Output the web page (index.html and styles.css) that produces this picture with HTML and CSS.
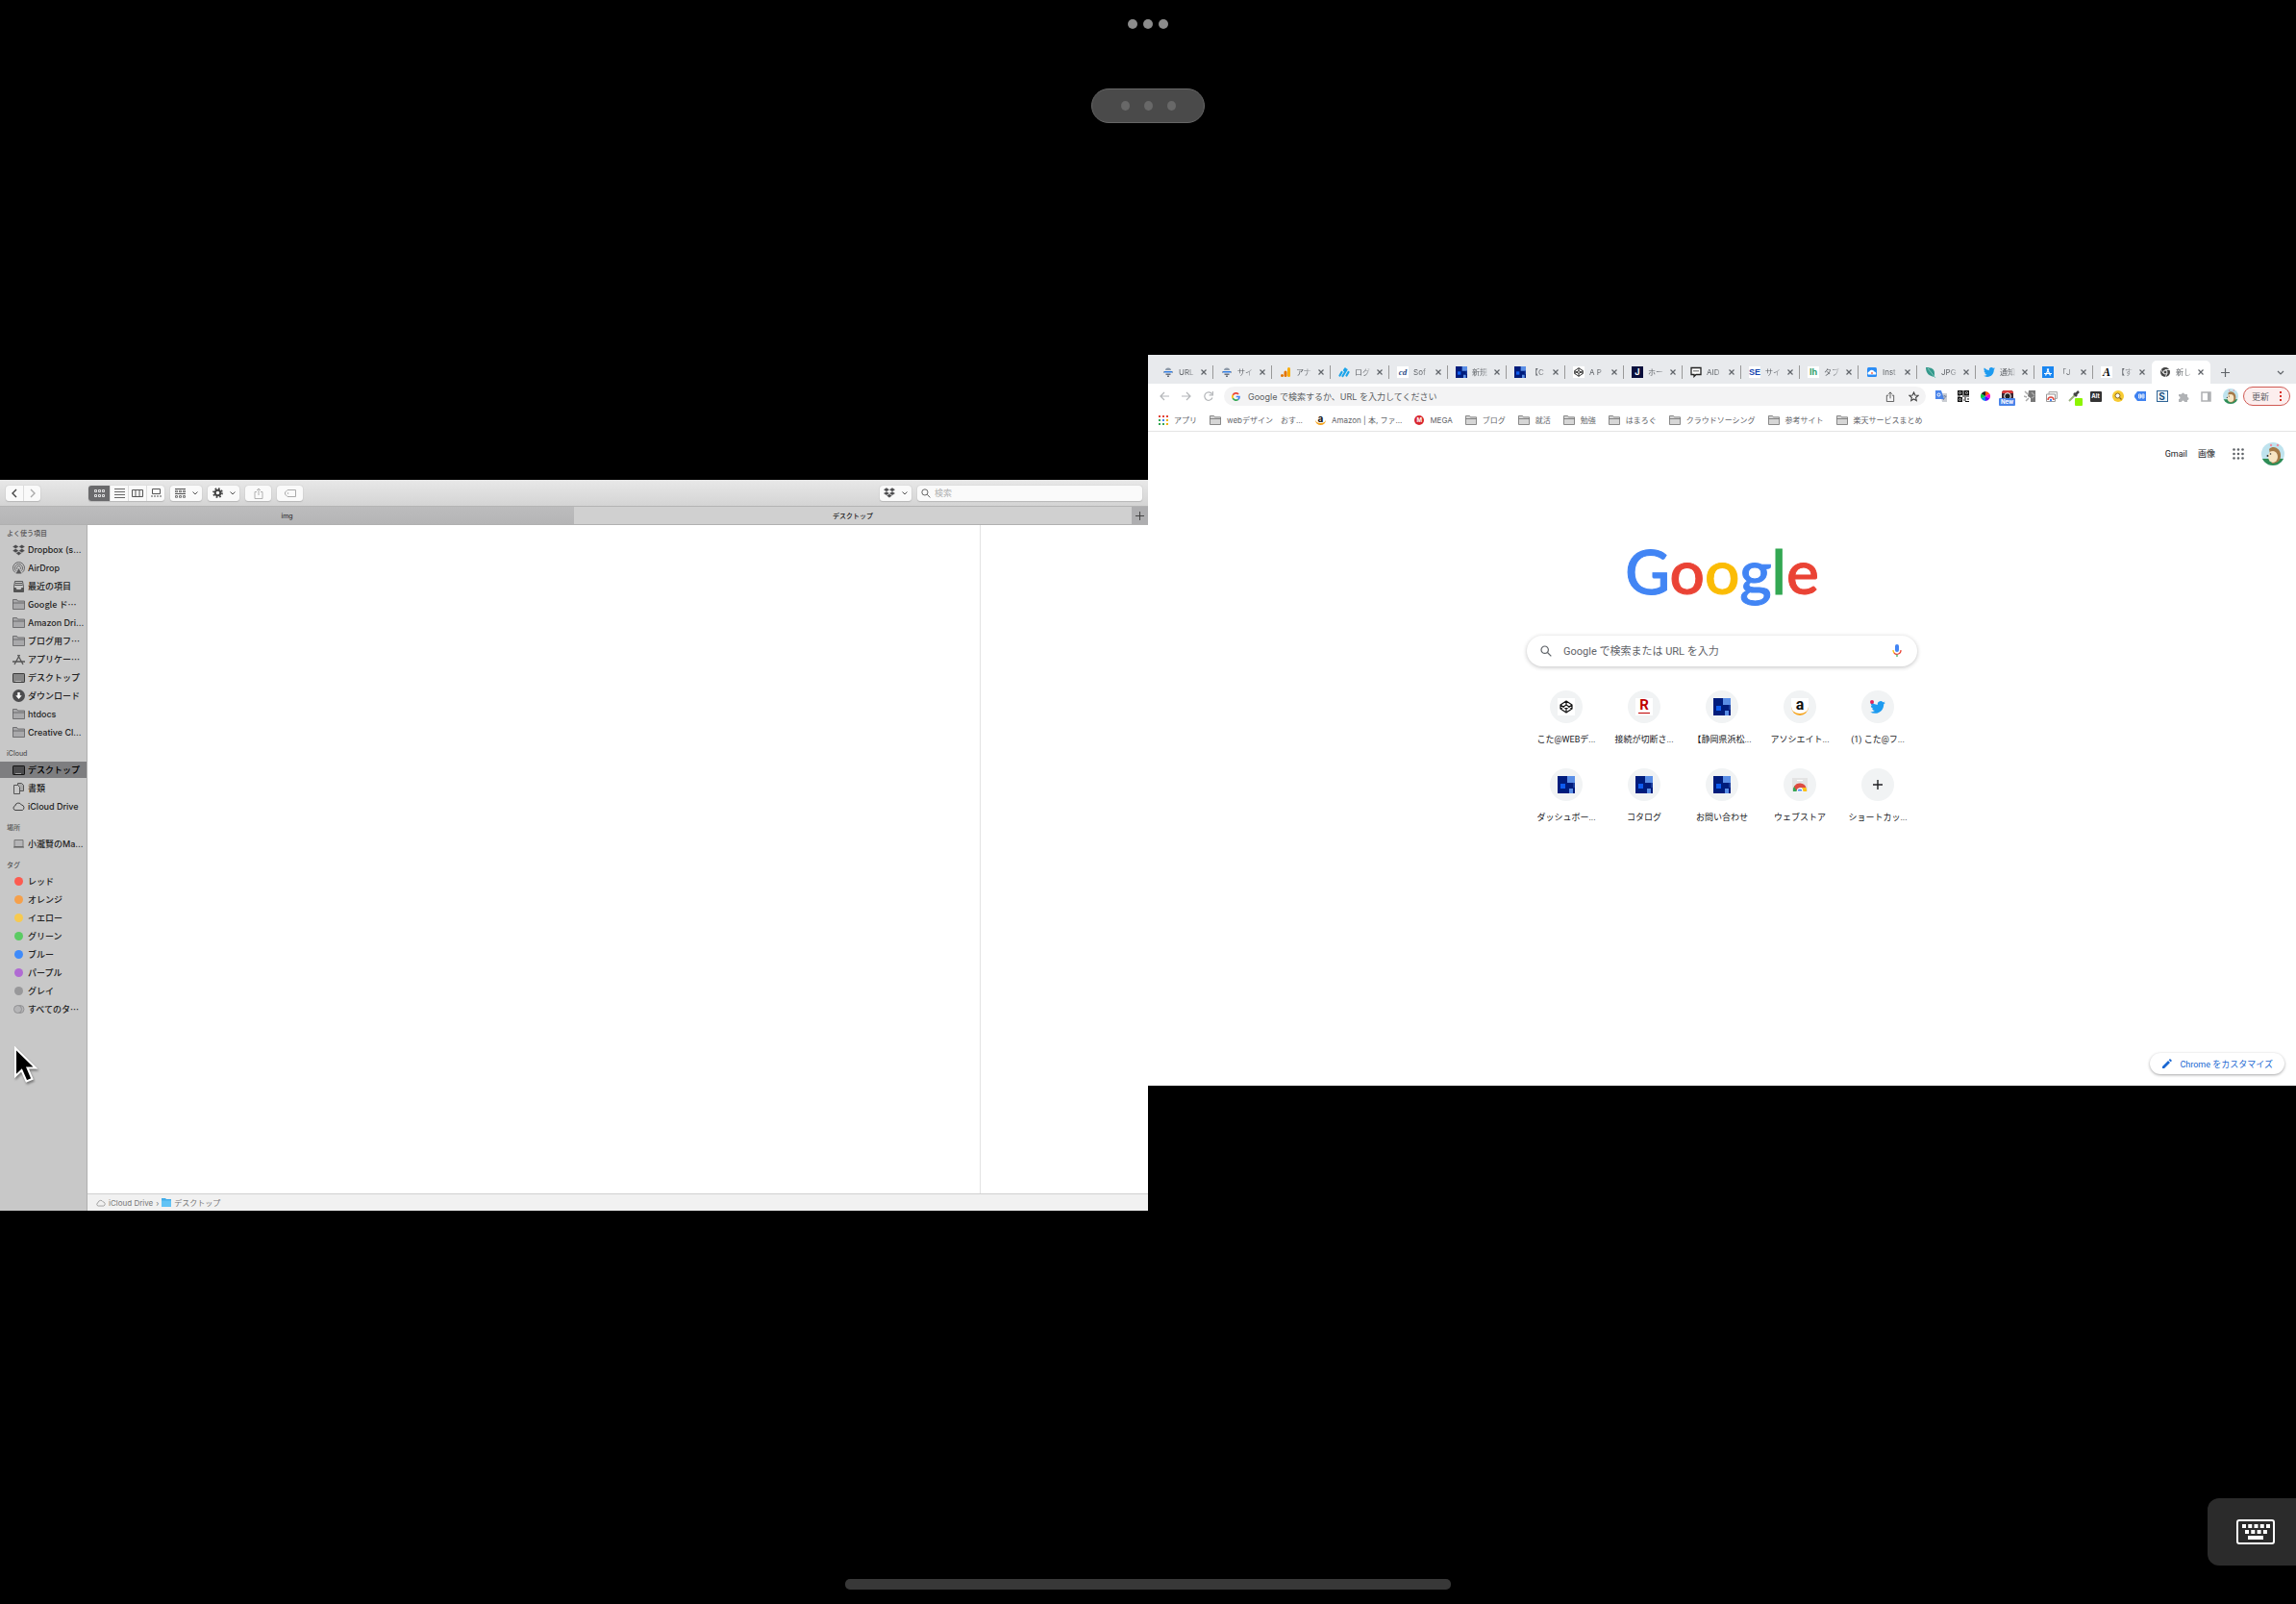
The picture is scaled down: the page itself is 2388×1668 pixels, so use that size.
FILE: index.html
```html
<!DOCTYPE html>
<html lang="ja">
<head>
    <meta charset="UTF-8">
    <meta name="viewport" content="width=device-width, initial-scale=1.0">
    <title>デスクトップ</title>
    <link rel="stylesheet" href="styles.css">
</head>
<body>
    <svg class="sprite" aria-hidden="true">
        <symbol id="folder" viewBox="0 0 13 11">
            <path d="M.5 10.500V.5h4l1 1.500h7v8.500z M.5 4h12" fill="#a9a9ab" stroke="#5c5c5e" stroke-width=".8"/>
        </symbol>
        <symbol id="bm-folder" viewBox="0 0 12 10">
            <path d="M.5 9.500v-9h4l1 1.300h6v7.700z" fill="#d6d6d6" stroke="#707070" stroke-width=".8"/>
            <path d="M.5 3.500h11" stroke="#707070" stroke-width=".8"/>
        </symbol>
        <symbol id="dropbox" viewBox="0 0 14 12">
            <path d="M3.500 0L7 2.200 3.500 4.400 0 2.200zM10.500 0L14 2.200l-3.500 2.200L7 2.200zM3.500 4.500L7 6.700 3.500 8.900 0 6.700zM10.500 4.500L14 6.700l-3.500 2.200L7 6.700zM7 7.600l3.200 2L7 11.800l-3.200-2.200z" fill="#4a4a4c" stroke="#d0d0d0" stroke-width=".3"/>
        </symbol>
        <symbol id="desktop" viewBox="0 0 13 10">
            <rect x=".5" y=".5" width="12" height="9" rx=".6" fill="currentColor" fill-opacity=".4" stroke="currentColor" stroke-opacity=".8"/>
            <path d="M3.500 8.500h6" stroke="#eee" stroke-dasharray="1 1"/>
        </symbol>
        <symbol id="cloud" viewBox="0 0 13 9">
            <path d="M3 8.500a2.300 2.300 0 0 1-.3-4.500 3.500 3.500 0 0 1 6.600-1 2.900 2.900 0 0 1 1 5.500z" fill="none" stroke="currentColor" stroke-width=".8"/>
        </symbol>
        <symbol id="chevron" viewBox="0 0 6 4">
            <path d="M.8.800L3 3 5.200.800" fill="none" stroke="#555" stroke-linecap="round"/>
        </symbol>
        <symbol id="close" viewBox="0 0 8 8">
            <path d="M1.500 1.500l5 5m0-5l-5 5" stroke="#5f6368" stroke-width="1.200"/>
        </symbol>
        <symbol id="squares" viewBox="0 0 18 18">
            <path d="M0 0h18v18H0z" fill="#001c7c"/>
            <path d="M10 0h8v7h-8zM12 13h4v5h-4z" fill="#5a8ee6"/>
            <path d="M16 7h2v5h-2z" fill="#1a3c9c"/>
            <path d="M3 8h5v5H3z" fill="#0e5cf0"/>
        </symbol>
        <symbol id="codepen" viewBox="0 0 14 14">
            <path d="M7 1l6 4v4l-6 4-6-4V5zM1 5l6 4 6-4M1 9l6-4 6 4M7 1v4M7 9v4" fill="none" stroke="#111" stroke-width="1.200" stroke-linejoin="round"/>
        </symbol>
        <symbol id="bird" viewBox="0 0 24 20">
            <path d="M7.550 19.750c9.050 0 14-7.500 14-14v-.65A10 10 0 0 0 24 2.560a10 10 0 0 1-2.800.78A5 5 0 0 0 23.340.600a10 10 0 0 1-3.130 1.200 4.900 4.900 0 0 0-8.400 4.500A14 14 0 0 1 1.670 1.150a4.900 4.900 0 0 0 1.530 6.570A5 5 0 0 1 .96 7.100a4.900 4.900 0 0 0 3.950 4.900 5 5 0 0 1-2.220.08 4.900 4.900 0 0 0 4.600 3.420A10 10 0 0 1 0 17.540a14 14 0 0 0 7.550 2.210z" fill="#1d9bf0"/>
        </symbol>
        <symbol id="crawler" viewBox="0 0 12 12">
            <path d="M3 4a3 2.500 0 0 1 6 0z" fill="#8d99a8"/>
            <path d="M2 5h8v1.500H2z" fill="#2f7be0"/>
            <path d="M1 5h1v2H1zM10 5h1v2h-1z" fill="#9aa6b5"/>
            <path d="M3.500 7.500h5V9h-5zM5 9.500h2V11H5z" fill="#68707c"/>
        </symbol>
        <symbol id="avatar" viewBox="0 0 24 24">
            <clipPath id="round"><circle cx="12" cy="12" r="12"/></clipPath>
            <g clip-path="url(#round)">
                <path d="M0 0h24v24H0z" fill="#bfe3ee"/>
                <path d="M0 17h24v7H0z" fill="#2f8d56"/>
                <path d="M8 7c5-5 13 0 12 8-.5 5-5 7-9 7z" fill="#a57a48"/>
                <ellipse cx="12" cy="15" rx="5" ry="6" fill="#f7e5c4"/>
                <path d="M6 14l4-5 3 4z" fill="#f7e5c4"/>
                <circle cx="9.500" cy="12" r=".8" fill="#333"/>
                <circle cx="6.500" cy="14" r="1" fill="#333"/>
                <circle cx="10" cy="3" r="1.200" fill="#ee8ca0"/>
                <circle cx="17" cy="3" r="1.200" fill="#ee8ca0"/>
            </g>
        </symbol>
        <symbol id="share" viewBox="0 0 10 12">
            <path d="M3 4.500H1v7h8v-7H7M5 8V1M3 3l2-2 2 2" fill="none" stroke="currentColor" stroke-width=".9"/>
        </symbol>
        <symbol id="lens" viewBox="0 0 12 12">
            <circle cx="4.700" cy="4.700" r="3.700" fill="none" stroke="currentColor" stroke-width="1.200"/>
            <path d="M7.500 7.500l3.800 3.800" stroke="currentColor" stroke-width="1.200"/>
        </symbol>
        <symbol id="webstore" viewBox="0 0 16 16">
            <path d="M0 1h16v14H0z" fill="#e3e3e3"/>
            <path d="M5 3h6v1H5z" fill="#fff"/>
            <path d="M1 15a7 7 0 0 1 1.500-6L6 15z" fill="#34a853"/>
            <path d="M2 10a7 7 0 0 1 12.500 1H8a4 4 0 0 0-3.500 3z" fill="#dd4b41"/>
            <path d="M14.500 11a7 7 0 0 1 .5 4h-4a4 4 0 0 0-1-4z" fill="#fbc116"/>
            <path d="M5 15a3 3 0 0 1 6 0z" fill="#4285f4" stroke="#fff"/>
        </symbol>
    </svg>

    <header class="handles">
        <div class="dots"><i></i><i></i><i></i></div>
        <button class="pill" aria-label="ウインドウ操作"><i></i><i></i><i></i></button>
    </header>

    <main class="windows">
        <!-- Finder -->
        <section class="window finder">
            <div class="finder-toolbar">
                <div class="segmented nav">
                    <button aria-label="戻る"><svg width="6" height="10"><path d="M5 1L1 5l4 4" fill="none" stroke="#444" stroke-width="1.400"/></svg></button>
                    <button aria-label="進む"><svg width="6" height="10"><path d="M1 1l4 4-4 4" fill="none" stroke="#aaa" stroke-width="1.400"/></svg></button>
                </div>
                <div class="segmented views">
                    <button class="on" aria-label="アイコン"><svg width="11" height="8"><path d="M.5.500h2v2h-2zM4.500.500h2v2h-2zM8.500.500h2v2h-2zM.5 5.500h2v2h-2zM4.500 5.500h2v2h-2zM8.500 5.500h2v2h-2z" fill="none" stroke="#fff" stroke-width=".8"/></svg></button>
                    <button aria-label="リスト"><svg width="11" height="10"><path d="M0 .5h11M0 3.500h11M0 6.500h11M0 9.500h11" stroke="#555" stroke-width=".9"/></svg></button>
                    <button aria-label="カラム"><svg width="12" height="8"><path d="M.5.500h11v7H.5zM4 .5v7M8 .5v7" fill="none" stroke="#555"/></svg></button>
                    <button aria-label="ギャラリー"><svg width="11" height="9"><path d="M1.500.500h8v5h-8z" fill="none" stroke="#555"/><path d="M0 8h11" stroke="#555" stroke-dasharray="2 1"/></svg></button>
                </div>
                <button class="tool drop" aria-label="グループ"><svg width="11" height="10"><path d="M0 .5h11M0 5.500h11" stroke="#555"/><path d="M.5 2.200h2v1.600h-2zM4.500 2.200h2v1.600h-2zM8.500 2.200h2v1.600h-2zM.5 7.500h2v1.800h-2zM4.500 7.500h2v1.800h-2zM8.500 7.500h2v1.800h-2z" fill="none" stroke="#555" stroke-width=".8"/></svg><svg width="6" height="4"><use href="#chevron"/></svg></button>
                <button class="tool drop" aria-label="アクション"><svg width="11" height="11"><circle cx="5.500" cy="5.500" r="2.800" fill="none" stroke="#444" stroke-width="2"/><circle cx="5.500" cy="5.500" r="4.500" fill="none" stroke="#444" stroke-width="1.800" stroke-dasharray="1.700 1.834"/></svg><svg width="6" height="4"><use href="#chevron"/></svg></button>
                <button class="tool off" aria-label="共有"><svg width="10" height="12"><use href="#share"/></svg></button>
                <button class="tool off" aria-label="タグ"><svg width="12" height="8"><path d="M3 .5h8.500v7H3L.5 5V3z" fill="none" stroke="currentColor"/><circle cx="3.500" cy="4" r=".8" fill="currentColor"/></svg></button>
                <button class="tool drop dropbox" aria-label="Dropbox"><svg width="12" height="11"><use href="#dropbox"/></svg><svg width="6" height="4"><use href="#chevron"/></svg></button>
                <label class="finder-search"><svg width="10" height="10"><use href="#lens"/></svg><input type="text" placeholder="検索" aria-label="検索"></label>
            </div>
            <div class="finder-tabs">
                <button class="finder-tab">img</button>
                <button class="finder-tab current jp">デスクトップ</button>
                <button class="finder-add" aria-label="新規タブ"><svg width="9" height="9"><path d="M4.500 0v9M0 4.500h9" stroke="#444"/></svg></button>
            </div>
            <div class="finder-body">
                <nav class="sidebar">
                    <h2>よく使う項目</h2>
                    <ul>
                        <li><a href="#"><svg width="13" height="12"><use href="#dropbox"/></svg>Dropbox (s...</a></li>
                        <li><a href="#"><svg width="13" height="13"><g fill="none" stroke="#5a5a5c" stroke-width=".9"><path d="M3 11.500a6 6 0 1 1 7 0M4 9.800a4 4 0 1 1 5 0M5 8a2 2 0 1 1 3 0"/></g><path d="M6.500 7l3 5.500h-6z" fill="#5a5a5c"/></svg>AirDrop</a></li>
                        <li><a href="#"><svg width="13" height="12"><path d="M2.500.500h8l1 6v5h-10v-5z" fill="#c8c8c8" stroke="#555"/><path d="M3 2.500h7M2.500 4.500h8" stroke="#555"/><path d="M1.500 7h2l1 2h4l1-2h2v4.500h-10z" fill="#555"/></svg>最近の項目</a></li>
                        <li><a class="jp" href="#"><svg width="13" height="11"><use href="#folder"/></svg>Google ド…</a></li>
                        <li><a href="#"><svg width="13" height="11"><use href="#folder"/></svg>Amazon Dri...</a></li>
                        <li><a class="jp" href="#"><svg width="13" height="11"><use href="#folder"/></svg>ブログ用フ…</a></li>
                        <li><a class="jp" href="#"><svg width="13" height="12"><path d="M7.500 1L2 11M5.500 1L11 11M0 8h13" stroke="#555" stroke-width="1.300"/></svg>アプリケー…</a></li>
                        <li><a class="jp" href="#"><svg width="13" height="10"><use href="#desktop"/></svg>デスクトップ</a></li>
                        <li><a class="jp" href="#"><svg width="13" height="13"><circle cx="6.500" cy="6.500" r="6.500" fill="#4c4c4e"/><path d="M5.300 3h2.400v3.300h2L6.500 10 3.300 6.300h2z" fill="#fff"/></svg>ダウンロード</a></li>
                        <li><a href="#"><svg width="13" height="11"><use href="#folder"/></svg>htdocs</a></li>
                        <li><a href="#"><svg width="13" height="11"><use href="#folder"/></svg>Creative Cl...</a></li>
                    </ul>
                    <h2>iCloud</h2>
                    <ul>
                        <li><a class="jp selected" href="#"><svg width="13" height="10"><use href="#desktop"/></svg>デスクトップ</a></li>
                        <li><a class="jp" href="#"><svg width="13" height="12"><path d="M5.500.500h4l2 2v6h-6z" fill="#aaa" stroke="#555"/><path d="M1.500 2.500h4l2 2v7h-6z" fill="#c8c8c8" stroke="#555"/></svg>書類</a></li>
                        <li><a href="#"><svg width="13" height="9"><use href="#cloud"/></svg>iCloud Drive</a></li>
                    </ul>
                    <h2>場所</h2>
                    <ul>
                        <li><a href="#"><svg width="13" height="9"><path d="M2 .5h9v7H2z" fill="#b5b5b7" stroke="#777"/><path d="M1 8h11" stroke="#555"/></svg>小瀧賢のMa...</a></li>
                    </ul>
                    <h2>タグ</h2>
                    <ul>
                        <li><a class="jp" href="#"><i class="tag red"></i>レッド</a></li>
                        <li><a class="jp" href="#"><i class="tag orange"></i>オレンジ</a></li>
                        <li><a class="jp" href="#"><i class="tag yellow"></i>イエロー</a></li>
                        <li><a class="jp" href="#"><i class="tag green"></i>グリーン</a></li>
                        <li><a class="jp" href="#"><i class="tag blue"></i>ブルー</a></li>
                        <li><a class="jp" href="#"><i class="tag purple"></i>パープル</a></li>
                        <li><a class="jp" href="#"><i class="tag gray"></i>グレイ</a></li>
                        <li><a class="jp" href="#"><svg width="13" height="9"><g fill="#b5b5b7" stroke="#88888a" stroke-width=".8"><circle cx="8" cy="4.500" r="4"/><circle cx="5.500" cy="4.500" r="4"/></g></svg>すべてのタ…</a></li>
                    </ul>
                </nav>
                <div class="finder-main">
                    <div class="files">
                        <div class="preview"></div>
                    </div>
                    <div class="path-bar">
                        <svg width="10" height="8"><use href="#cloud"/></svg>
                        <span>iCloud Drive</span>
                        <span>›</span>
                        <svg width="10" height="9"><path d="M0 0h4l1 1h5v8H0z" fill="#43ade9"/><path d="M0 2.500h10V9H0z" fill="#62c3f5"/></svg>
                        <span>デスクトップ</span>
                    </div>
                </div>
            </div>
            <svg class="cursor" width="26" height="40" viewBox="0 0 26 40">
                <path d="M2 2v29l6.500-6 5 11.500 6-2.500-5-11.500H23z" fill="#000" stroke="#fff" stroke-width="2"/>
            </svg>
        </section>

        <!-- Chrome -->
        <section class="window chrome">
            <div class="tab-strip">
                <div class="tab"><svg width="12" height="12"><use href="#crawler"/></svg><span>URL</span><button aria-label="閉じる"><svg width="8" height="8"><use href="#close"/></svg></button></div>
                <div class="tab"><svg width="12" height="12"><use href="#crawler"/></svg><span>サイ</span><button aria-label="閉じる"><svg width="8" height="8"><use href="#close"/></svg></button></div>
                <div class="tab"><svg width="12" height="12"><rect x="8" y="1" width="3" height="10" rx="1.500" fill="#f9ab00"/><rect x="4.500" y="4.500" width="3" height="6.500" rx="1.500" fill="#e37400"/><circle cx="2.500" cy="9.500" r="1.500" fill="#e37400"/></svg><span>アナ</span><button aria-label="閉じる"><svg width="8" height="8"><use href="#close"/></svg></button></div>
                <div class="tab"><svg width="12" height="12"><path d="M1.500 9.500l2-3.500M4.500 10l4-6.500M8.500 9.500l2-3.500M6 4l1-1.500" stroke="#1ba4ea" stroke-width="2.200" stroke-linecap="round"/></svg><span>ログ</span><button aria-label="閉じる"><svg width="8" height="8"><use href="#close"/></svg></button></div>
                <div class="tab"><b class="fav script">cd</b><span>Sof</span><button aria-label="閉じる"><svg width="8" height="8"><use href="#close"/></svg></button></div>
                <div class="tab"><svg width="12" height="12"><use href="#squares"/></svg><span>新規</span><button aria-label="閉じる"><svg width="8" height="8"><use href="#close"/></svg></button></div>
                <div class="tab"><svg width="12" height="12"><use href="#squares"/></svg><span>【C</span><button aria-label="閉じる"><svg width="8" height="8"><use href="#close"/></svg></button></div>
                <div class="tab"><svg width="12" height="12"><path d="M0 0h12v12H0z" fill="#fff"/><use href="#codepen" x="1" y="1" width="10" height="10"/></svg><span>A P</span><button aria-label="閉じる"><svg width="8" height="8"><use href="#close"/></svg></button></div>
                <div class="tab"><b class="fav navy">J</b><span>ホー</span><button aria-label="閉じる"><svg width="8" height="8"><use href="#close"/></svg></button></div>
                <div class="tab"><svg width="12" height="12"><path d="M1 1.500h10v7H6l-2 2v-2H1z" fill="#fff" stroke="#222" stroke-width="1.300"/><path d="M4 4v1.500M6 4v1.500M8 4v1.500" stroke="#222"/></svg><span>AID</span><button aria-label="閉じる"><svg width="8" height="8"><use href="#close"/></svg></button></div>
                <div class="tab"><b class="fav se">SE</b><span>サイ</span><button aria-label="閉じる"><svg width="8" height="8"><use href="#close"/></svg></button></div>
                <div class="tab"><b class="fav lh">lh</b><span>タブ</span><button aria-label="閉じる"><svg width="8" height="8"><use href="#close"/></svg></button></div>
                <div class="tab"><svg width="12" height="12"><rect x="1" y="1" width="10" height="10" rx="1.500" fill="#2b8df5"/><path d="M2 8.500a2 2 0 0 1 1-3 3 3 0 0 1 5.500 0 2 2 0 0 1 1.500 3z" fill="#fff"/><circle cx="6" cy="7" r="1" fill="#f26e5a"/></svg><span>Inst</span><button aria-label="閉じる"><svg width="8" height="8"><use href="#close"/></svg></button></div>
                <div class="tab"><svg width="12" height="12"><path d="M1 1c6 0 9 2 9 6v4C4 10 1 7 1 1z" fill="#35998c"/><path d="M3 2l8 10" stroke="#7cc7bb"/></svg><span>JPG</span><button aria-label="閉じる"><svg width="8" height="8"><use href="#close"/></svg></button></div>
                <div class="tab"><svg width="12" height="10"><use href="#bird"/></svg><span>通知</span><button aria-label="閉じる"><svg width="8" height="8"><use href="#close"/></svg></button></div>
                <div class="tab"><svg width="12" height="12"><path d="M0 0h12v12H0z" fill="#1a86f0"/><path d="M6.800 2.500L3.500 9.500M5.200 2.500L8.500 9.500M2 7.500h8" stroke="#fff" stroke-width="1.200"/></svg><span>「J</span><button aria-label="閉じる"><svg width="8" height="8"><use href="#close"/></svg></button></div>
                <div class="tab"><b class="fav italic">A</b><span>【す</span><button aria-label="閉じる"><svg width="8" height="8"><use href="#close"/></svg></button></div>
                <div class="tab active"><svg width="12" height="12"><circle cx="6" cy="6" r="5" fill="#444"/><path d="M6 3.500h5M3.800 7.200L1.400 3M8.200 7.200L5.700 11.500" stroke="#fff" stroke-width=".8"/><circle cx="6" cy="6" r="2" fill="#444" stroke="#fff"/></svg><span>新し</span><button aria-label="閉じる"><svg width="8" height="8"><use href="#close"/></svg></button></div>
                <button class="new-tab" aria-label="新しいタブ"><svg width="9" height="9"><path d="M4.500 0v9M0 4.500h9" stroke="#5f6368" stroke-width="1.200"/></svg></button>
                <button class="tab-menu" aria-label="タブを検索"><svg width="8" height="5"><path d="M1 1l3 3 3-3" fill="none" stroke="#5f6368" stroke-width="1.200"/></svg></button>
            </div>

            <div class="toolbar">
                <button class="go" aria-label="戻る"><svg width="10" height="10"><path d="M10 5H1M5 1L1 5l4 4" fill="none" stroke="#b4b6b9" stroke-width="1.200"/></svg></button>
                <button class="go" aria-label="進む"><svg width="10" height="10"><path d="M0 5h9M5 1l4 4-4 4" fill="none" stroke="#b4b6b9" stroke-width="1.200"/></svg></button>
                <button class="go" aria-label="再読み込み"><svg width="10" height="10"><path d="M9 6.500A4.200 4.200 0 1 1 8.500 2.700M9.400 0v3.800H5.600" fill="none" stroke="#b4b6b9" stroke-width="1.200"/></svg></button>
                <div class="omnibox">
                    <svg width="9" height="9" viewBox="0 0 18 18"><g fill="none" stroke-width="3.400"><path d="M14.300 3.900A7.200 7.200 0 0 0 2.600 5.700" stroke="#ea4335"/><path d="M2.600 5.700a7.200 7.200 0 0 0 0 6.600" stroke="#fbbc05"/><path d="M2.600 12.300a7.200 7.200 0 0 0 11 2.300" stroke="#34a853"/><path d="M13.600 14.600A7 7 0 0 0 16 9H9.500" stroke="#4285f4"/></g></svg>
                    <input type="text" placeholder="Google で検索するか、URL を入力してください" aria-label="アドレス">
                    <button aria-label="共有"><svg width="10" height="11"><use href="#share"/></svg></button>
                    <button aria-label="ブックマーク"><svg width="11" height="11"><path d="M5.500 1l1.300 3 3.200.300-2.400 2.200.700 3.200-2.800-1.700-2.800 1.700.700-3.200L1 4.300 4.200 4z" fill="none" stroke="#444" stroke-width="1.100"/></svg></button>
                </div>
                <div class="extensions">
                    <button aria-label="翻訳"><svg width="12" height="12"><path d="M5 3h7v9H7z" fill="#c9ccd2"/><path d="M0 0h6l3 9H0z" fill="#4a84ea"/><circle cx="3.500" cy="4.500" r="1.500" fill="none" stroke="#fff"/><path d="M7.500 6h4M9.500 5v1M8 10l3-4" stroke="#63779c" stroke-width=".7"/></svg></button>
                    <button aria-label="QR"><svg width="12" height="12"><path d="M.7.700h3.600v3.600H.7zM7.700.700h3.600v3.600H7.700zM.7 7.700h3.600v3.600H.7z" fill="none" stroke="#111" stroke-width="1.400"/><path d="M2 2.500h1M9 2.500h1M2 9.500h1M6 0v5M5 6h7M0 6h3M7 8h2M10 9h2M6 10h3M8 11.500h4" stroke="#111" stroke-width="1.200"/></svg></button>
                    <button aria-label="カラー"><svg width="10" height="10"><path d="M5 5V0a5 5 0 0 1 4.300 2.500z" fill="#f50"/><path d="M5 5l4.300-2.500a5 5 0 0 1 0 5z" fill="#f0c"/><path d="M5 5l4.300 2.500A5 5 0 0 1 5 10z" fill="#60f"/><path d="M5 5v5A5 5 0 0 1 .7 7.500z" fill="#08e"/><path d="M5 5L.7 7.500a5 5 0 0 1 0-5z" fill="#0c4"/><path d="M5 5L.7 2.500A5 5 0 0 1 5 0z" fill="#222"/></svg></button>
                    <button class="badged" aria-label="カメラ"><svg width="12" height="12"><rect width="12" height="12" rx="3" fill="#3a2430"/><path d="M0 3a3 3 0 0 1 3-3h6a3 3 0 0 1 3 3z" fill="#d93a3a"/><circle cx="6" cy="6" r="3.300" fill="#222" stroke="#fff"/></svg><em class="new">New</em></button>
                    <button aria-label="計測"><svg width="12" height="12"><path d="M5 0h7v12H7V8L4 6z" fill="#777"/><path d="M1 1l3 3M0 6l3 1M2 11l3-3M8 2l3 3M8 8l3-2" stroke="#aaa" stroke-width="1.500"/></svg></button>
                    <button aria-label="ギャラリー"><svg width="12" height="11"><path d="M3 .5h8.500v7H3z" fill="#eee" stroke="#aaa"/><path d="M.5 3h9v7.500h-9z" fill="#fff" stroke="#999"/><path d="M2 9a3 3 0 0 1 6 0" fill="none" stroke="#dd4b41" stroke-width="1.500"/><circle cx="5" cy="9" r="1.200" fill="#4285f4"/></svg></button>
                    <button class="badged" aria-label="スポイト"><svg width="12" height="12"><path d="M1 11l6-6" stroke="#9ab07c" stroke-width="2"/><path d="M6 3l3 3M8 4l3-3" stroke="#444" stroke-width="2.500"/></svg><em class="pick"></em></button>
                    <button aria-label="Alt"><b class="alt">Alt</b></button>
                    <button aria-label="検索"><svg width="12" height="12"><circle cx="6" cy="6" r="6" fill="#f8cb32"/><circle cx="5.500" cy="5.500" r="2.500" fill="#fff" stroke="#8a6a20"/><path d="M7.500 7.500l2 2" stroke="#8a6a20" stroke-width="1.300"/></svg></button>
                    <button aria-label="タグ"><svg width="12" height="10"><path d="M3 0h9v10H3L0 6V4z" fill="#3f82f0"/><path d="M4.500 3h2v4h-2zM8 3h2v4H8zM4.500 5h5.500" fill="none" stroke="#fff" stroke-width=".8"/></svg></button>
                    <button aria-label="Stylus"><b class="stylus">S</b></button>
                    <button aria-label="拡張機能"><svg width="11" height="11"><path d="M0 3h3a1.500 1.500 0 1 1 3 0h3v3a1.500 1.500 0 1 1 0 3v2H6a1.500 1.500 0 0 0-3 0H0V8a1.500 1.500 0 0 0 0-3z" fill="#b0b2b5"/></svg></button>
                    <button aria-label="サイドパネル"><svg width="11" height="11"><path d="M1 1h9v9H1z" fill="none" stroke="#aeb0b3" stroke-width="1.500"/><path d="M7 1h3v9H7z" fill="#aeb0b3"/></svg></button>
                </div>
                <button class="profile" aria-label="プロフィール"><svg width="16" height="16"><use href="#avatar"/></svg></button>
                <button class="update">更新<svg width="2" height="10"><path d="M0 0h2v2H0zM0 4h2v2H0zM0 8h2v2H0z" fill="#d93025"/></svg></button>
            </div>

            <nav class="bookmarks">
                <a href="#"><svg width="10" height="10"><path d="M0 0h2v2H0zM4 0h2v2H4zM8 0h2v2H8z" fill="#e34135"/><path d="M0 4h2v2H0z" fill="#34a853"/><path d="M4 4h2v2H4z" fill="#4285f4"/><path d="M8 4h2v2H8zM8 8h2v2H8z" fill="#f2b10a"/><path d="M0 8h2v2H0zM4 8h2v2H4z" fill="#34a853"/></svg>アプリ</a>
                <a href="#"><svg width="12" height="10"><use href="#bm-folder"/></svg>webデザイン　おす...</a>
                <a href="#"><b class="amazon small">a</b>Amazon | 本, ファ...</a>
                <a href="#"><b class="mega">M</b>MEGA</a>
                <a href="#"><svg width="12" height="10"><use href="#bm-folder"/></svg>ブログ</a>
                <a href="#"><svg width="12" height="10"><use href="#bm-folder"/></svg>就活</a>
                <a href="#"><svg width="12" height="10"><use href="#bm-folder"/></svg>勉強</a>
                <a href="#"><svg width="12" height="10"><use href="#bm-folder"/></svg>はまろぐ</a>
                <a href="#"><svg width="12" height="10"><use href="#bm-folder"/></svg>クラウドソーシング</a>
                <a href="#"><svg width="12" height="10"><use href="#bm-folder"/></svg>参考サイト</a>
                <a href="#"><svg width="12" height="10"><use href="#bm-folder"/></svg>楽天サービスまとめ</a>
            </nav>

            <div class="page">
                <div class="page-top">
                    <a href="#">Gmail</a>
                    <a href="#">画像</a>
                    <button aria-label="アプリ"><svg width="12" height="12"><g fill="#5f6368"><circle cx="1.500" cy="1.500" r="1.300"/><circle cx="6" cy="1.500" r="1.300"/><circle cx="10.500" cy="1.500" r="1.300"/><circle cx="1.500" cy="6" r="1.300"/><circle cx="6" cy="6" r="1.300"/><circle cx="10.500" cy="6" r="1.300"/><circle cx="1.500" cy="10.500" r="1.300"/><circle cx="6" cy="10.500" r="1.300"/><circle cx="10.500" cy="10.500" r="1.300"/></g></svg></button>
                    <button aria-label="アカウント"><svg width="24" height="24"><use href="#avatar"/></svg></button>
                </div>
                <h1 class="logo"><span class="b">G</span><span class="r">o</span><span class="y">o</span><span class="b">g</span><span class="g">l</span><span class="r">e</span></h1>
                <div class="search">
                    <svg width="12" height="12"><use href="#lens"/></svg>
                    <input type="text" placeholder="Google で検索または URL を入力" aria-label="Google で検索">
                    <button aria-label="音声検索"><svg width="10" height="14"><rect x="3" y="0" width="4" height="8" rx="2" fill="#4285f4"/><path d="M1 6a4 4 0 0 0 1.200 3" fill="none" stroke="#fbbc05" stroke-width="1.200"/><path d="M2 9a4 4 0 0 0 7-3" fill="none" stroke="#ea4335" stroke-width="1.200"/><path d="M5 10.500V13" stroke="#34a853" stroke-width="1.200"/></svg></button>
                </div>
                <div class="shortcuts">
                    <a href="#"><i><svg class="card" width="18" height="18"><use href="#codepen" x="2" y="2" width="14" height="14"/></svg></i>こた@WEBデ...</a>
                    <a href="#"><i><b class="rakuten">R</b></i>接続が切断さ...</a>
                    <a href="#"><i><svg width="18" height="18"><use href="#squares"/></svg></i>【静岡県浜松...</a>
                    <a href="#"><i><b class="amazon">a</b></i>アソシエイト...</a>
                    <a href="#"><i><svg width="16" height="14"><use href="#bird" y="1" width="16" height="13"/><circle cx="2" cy="2" r="2" fill="#e0245e"/></svg></i>(1) こた@フ...</a>
                    <a href="#"><i><svg width="18" height="18"><use href="#squares"/></svg></i>ダッシュボー...</a>
                    <a href="#"><i><svg width="18" height="18"><use href="#squares"/></svg></i>コタログ</a>
                    <a href="#"><i><svg width="18" height="18"><use href="#squares"/></svg></i>お問い合わせ</a>
                    <a href="#"><i><svg width="16" height="16"><use href="#webstore"/></svg></i>ウェブストア</a>
                    <a href="#"><i><svg width="10" height="10"><path d="M5 0v10M0 5h10" stroke="#202124" stroke-width="1.400"/></svg></i>ショートカッ...</a>
                </div>
                <button class="customize"><svg width="10" height="10"><path d="M0 10V8l6-6 2 2-6 6zM6.700 1.300L8 0l2 2-1.300 1.300z" fill="#1967d2"/></svg>Chrome をカスタマイズ</button>
            </div>
        </section>
    </main>

    <footer class="dock">
        <button class="keyboard" aria-label="キーボード">
            <svg width="40" height="26"><rect x="1" y="1" width="38" height="24" rx="2" fill="none" stroke="#fff" stroke-width="2"/><path d="M6 7h29" stroke="#fff" stroke-width="4" stroke-dasharray="4 2.250"/><path d="M9 13h23" stroke="#fff" stroke-width="4" stroke-dasharray="4 2.300"/><path d="M12 19h16" stroke="#fff" stroke-width="4"/></svg>
        </button>
        <div class="home-bar"></div>
    </footer>
</body>
</html>
```

FILE: styles.css
```css
* {
    box-sizing: border-box;
}
body {
    display: flex;
    flex-direction: column;
    min-height: 100vh;
    margin: 0;
    background: #000;
    font-family: Inter, "Noto Sans CJK JP", sans-serif;
}
button, input {
    margin: 0;
    padding: 0;
    border: none;
    background: none;
    color: inherit;
    font: inherit;
}
button {
    display: flex;
    justify-content: center;
    align-items: center;
    flex-shrink: 0;
}
input {
    flex: 1;
    min-width: 0;
    outline: none;
}
a {
    color: inherit;
    text-decoration: none;
}
svg {
    display: block;
    flex-shrink: 0;
}
.sprite {
    position: absolute;
    width: 0;
    height: 0;
}
.jp {
    font-family: "Noto Sans CJK JP", sans-serif;
}

/* top handles */
.handles {
    display: flex;
    flex-direction: column;
    align-items: center;
    gap: 62px;
    padding-top: 20px;
}
.dots {
    display: flex;
    gap: 6px;
}
.dots i {
    width: 10px;
    height: 10px;
    border-radius: 50%;
    background: #8c8c8c;
}
.pill {
    gap: 15px;
    width: 118px;
    height: 36px;
    border: 1px solid #666;
    border-radius: 18px;
    background: #4a4a4a;
}
.pill i {
    width: 9px;
    height: 10px;
    border-radius: 50%;
    background: #686868;
}

.windows {
    display: grid;
    grid-template-columns: 1fr 1fr;
    align-items: start;
    margin-top: 241px;
}
.window {
    display: flex;
    flex-direction: column;
    min-width: 0;
    min-height: 760px;
    background: #fff;
}

/* Finder */
.finder {
    position: relative;
    margin-top: 130px;
    color: #222;
    font-size: 9px;
}
.finder-toolbar {
    display: flex;
    align-items: center;
    gap: 6px;
    height: 28px;
    padding: 0 6px;
    border-bottom: 1px solid #b4b4b4;
    background: linear-gradient(#e8e8e8, #d4d4d4);
}
.segmented, .tool, .finder-search {
    height: 16px;
    border-radius: 3px;
    background: #fafafa;
    box-shadow: 0 0 1px #aaa, 0 1px 1px #bbb;
}
.segmented {
    display: flex;
    overflow: hidden;
}
.segmented button {
    width: 19px;
    border-left: 1px solid #ddd;
}
.segmented button:first-child {
    border-left: none;
}
.nav {
    margin-right: 44px;
}
.nav button {
    width: 18px;
}
.views .on {
    width: 22px;
    background: #6a6a6c;
}
.tool {
    width: 27px;
}
.drop {
    gap: 7px;
    width: 33px;
}
.off {
    color: #aaa;
}
.dropbox {
    margin-left: auto;
}
.finder-search {
    display: flex;
    align-items: center;
    gap: 4px;
    width: 234px;
    padding: 0 4px;
    color: #666;
}
.finder-search input::placeholder {
    color: #b0b0b0;
}
.finder-tabs {
    display: flex;
    height: 19px;
    border-bottom: 1px solid #b0b0b0;
}
.finder-tab {
    width: 50%;
    background: linear-gradient(#bcbcbd, #b5b5b6);
    font-size: 7px;
}
.finder-tab.current {
    flex: 1;
    background: #d0d0d0;
    font-weight: 500;
}
.finder-add {
    width: 17px;
    background: #aeaeb0;
}
.finder-body {
    display: flex;
    flex: 1;
}
.sidebar {
    width: 91px;
    padding-top: 1px;
    border-right: 1px solid #b0b0b0;
    background: #c8c8c8;
}
.sidebar h2 {
    margin: 0;
    padding-left: 7px;
    color: #555;
    font-size: 7px;
    font-weight: 500;
    line-height: 15px;
}
.sidebar ul {
    margin: 0 0 5px;
    padding: 0;
    list-style: none;
}
.sidebar li {
    padding: 1px 0;
}
.sidebar a {
    display: flex;
    align-items: center;
    gap: 3px;
    height: 17px;
    padding-left: 13px;
    color: #222;
    font-weight: 500;
    line-height: 17px;
    white-space: nowrap;
}
.sidebar .selected {
    background: #7e7e80;
    color: #000;
}
.tag {
    width: 9px;
    height: 9px;
    margin: 0 2px;
    border-radius: 50%;
}
.red { background: #fc5b50; }
.orange { background: #f5a04b; }
.yellow { background: #f7ca50; }
.green { background: #5bcb63; }
.blue { background: #3f8bfa; }
.purple { background: #b06bd3; }
.gray { background: #98989a; }
.finder-main {
    display: flex;
    flex-direction: column;
    flex: 1;
}
.files {
    display: flex;
    justify-content: flex-end;
    flex: 1;
}
.preview {
    width: 175px;
    border-left: 1px solid #e2e2e2;
}
.path-bar {
    display: flex;
    align-items: center;
    gap: 3px;
    height: 18px;
    padding-left: 9px;
    border-top: 1px solid #d0d0d0;
    background: #f1f1f1;
    color: #777;
    font-size: 8px;
    line-height: 16px;
}
.cursor {
    position: absolute;
    left: 14px;
    top: 589px;
    filter: drop-shadow(1px 2px 1px rgba(0, 0, 0, 0.4));
}

/* Chrome */
.chrome {
    color: #5f6368;
    font-size: 8px;
}
.tab-strip {
    display: flex;
    align-items: center;
    height: 30px;
    padding: 6px 12px 0 7px;
    background: #e8eaed;
}
.tab {
    display: flex;
    align-items: center;
    width: 61px;
    height: 24px;
    padding: 0 6px 0 8px;
    background: linear-gradient(#999, #999) right / 1px 14px no-repeat;
}
.tab span {
    flex: 1;
    margin-left: 5px;
    margin-right: 4px;
    line-height: 16px;
    white-space: nowrap;
    -webkit-mask-image: linear-gradient(90deg, #000 50%, transparent);
    mask-image: linear-gradient(90deg, #000 50%, transparent);
}
.tab:nth-child(17) {
    background: none;
}
.tab.active {
    border-radius: 5px 5px 0 0;
    background: #fff;
}
.fav {
    width: 12px;
    height: 12px;
    background: #fff;
    color: #222;
    font-size: 9px;
    line-height: 12px;
    text-align: center;
}
.script {
    color: #2b4a86;
    font-family: "Liberation Serif", serif;
    font-style: italic;
}
.navy {
    background: #0a0f3c;
    color: #fff;
}
.se {
    color: #1546b0;
    font-family: "Liberation Sans", sans-serif;
}
.lh {
    color: #2f9e68;
}
.italic {
    color: #000;
    font-family: "Liberation Serif", serif;
    font-size: 12px;
    font-style: italic;
}
.new-tab {
    width: 31px;
}
.tab-menu {
    margin-left: auto;
}
.toolbar {
    display: flex;
    align-items: center;
    height: 26px;
    padding: 0 6px 0 5px;
}
.go {
    width: 23px;
}
.omnibox {
    display: flex;
    align-items: center;
    flex: 1;
    gap: 8px;
    height: 20px;
    margin: 0 4px 0 5px;
    padding: 0 7px 0 8px;
    border-radius: 10px;
    background: #f3f3f4;
    color: #444;
    font-size: 9px;
}
.omnibox button {
    width: 12px;
    margin-left: 4px;
}
.omnibox input::placeholder {
    color: #5a5d61;
}
.extensions {
    display: flex;
}
.extensions button {
    position: relative;
    width: 23px;
    height: 20px;
}
.extensions em {
    position: absolute;
    font-style: normal;
}
.new {
    bottom: 0;
    padding: 0 2px;
    border-radius: 1px;
    background: #4a84ea;
    color: #fff;
    font-size: 6px;
    font-weight: 700;
    line-height: 8px;
}
.pick {
    right: 2px;
    bottom: 0;
    width: 8px;
    height: 8px;
    border-radius: 1px;
    background: #8df500;
}
.alt {
    width: 12px;
    height: 11px;
    border-radius: 1px;
    background: #333;
    color: #fff;
    font-size: 6px;
    line-height: 10px;
}
.stylus {
    width: 12px;
    height: 12px;
    border: 1px solid #2f6496;
    background: #eef5fa;
    color: #1b4f80;
    font-size: 10px;
    line-height: 10px;
}
.profile {
    width: 27px;
}
.update {
    gap: 11px;
    width: 49px;
    height: 20px;
    border: 1px solid #d05a54;
    border-radius: 10px;
    background: #fceeee;
    font-size: 9px;
}
.bookmarks {
    display: flex;
    align-items: center;
    gap: 13px;
    height: 24px;
    padding-left: 11px;
    border-bottom: 1px solid #e4e4e4;
}
.bookmarks a {
    display: flex;
    align-items: center;
    gap: 6px;
    line-height: 16px;
    white-space: nowrap;
}
.amazon {
    width: 18px;
    height: 18px;
    border-bottom: 2px solid #f5a623;
    border-radius: 0 0 9px 9px;
    background: #fff;
    color: #111;
    font-size: 16px;
    line-height: 14px;
    text-align: center;
}
.amazon.small {
    width: 11px;
    height: 11px;
    font-size: 10px;
    line-height: 8px;
}
.mega {
    width: 10px;
    height: 10px;
    border-radius: 50%;
    background: #d9272e;
    color: #fff;
    font-size: 6px;
    line-height: 10px;
    text-align: center;
}

/* new tab page */
.page {
    display: flex;
    flex-direction: column;
    align-items: center;
    flex: 1;
    padding: 11px 12px 12px;
    color: #202124;
    font-family: Roboto, "Noto Sans CJK JP", sans-serif;
    font-size: 9px;
}
.page-top {
    display: flex;
    align-items: center;
    align-self: flex-end;
    gap: 18px;
    line-height: 24px;
}
.page-top a + a {
    margin-left: -7px;
}
.logo {
    margin: 70px 0 0;
    font-family: Lato, sans-serif;
    font-size: 64px;
    font-weight: 500;
    line-height: 80px;
    -webkit-text-stroke: 1px currentColor;
}
.b { color: #4285f4; }
.r { color: #ea4335; }
.y { color: #fbbc05; }
.g { color: #34a853; }
.logo span {
    background: none;
}
.search {
    display: flex;
    align-items: center;
    gap: 12px;
    width: 406px;
    height: 32px;
    margin-top: 27px;
    padding: 0 16px 0 14px;
    border-radius: 16px;
    box-shadow: 0 1px 4px rgba(32, 33, 36, 0.28);
    color: #5f6368;
    font-size: 11px;
}
.search input::placeholder {
    color: #5f6368;
}
.shortcuts {
    display: grid;
    grid-template-columns: repeat(5, 81px);
    margin-top: 25px;
}
.shortcuts a {
    display: flex;
    flex-direction: column;
    align-items: center;
    gap: 9px;
    height: 81px;
    line-height: 16px;
    white-space: nowrap;
}
.shortcuts i {
    display: flex;
    justify-content: center;
    align-items: center;
    width: 34px;
    height: 34px;
    border-radius: 50%;
    background: #f1f3f4;
    font-style: normal;
}
.card {
    background: #fff;
}
.rakuten {
    width: 18px;
    height: 18px;
    background: linear-gradient(#bf0000, #bf0000) center 15px / 12px 1px no-repeat #fff;
    color: #bf0000;
    font-size: 15px;
    line-height: 15px;
    text-align: center;
}
.customize {
    align-self: flex-end;
    gap: 8px;
    height: 22px;
    margin-top: auto;
    padding: 0 12px 0 13px;
    border-radius: 11px;
    box-shadow: 0 1px 3px rgba(32, 33, 36, 0.4);
    color: #1967d2;
}

/* bottom of the screen */
.dock {
    display: flex;
    flex-direction: column;
    align-items: center;
    gap: 14px;
    margin-top: auto;
    padding-bottom: 15px;
}
.keyboard {
    align-self: flex-end;
    width: 92px;
    height: 70px;
    padding-left: 8px;
    border-radius: 12px 0 0 12px;
    background: #2b2b2b;
}
.home-bar {
    width: 630px;
    max-width: 80%;
    height: 11px;
    border-radius: 5px;
    background: #383838;
}
```
